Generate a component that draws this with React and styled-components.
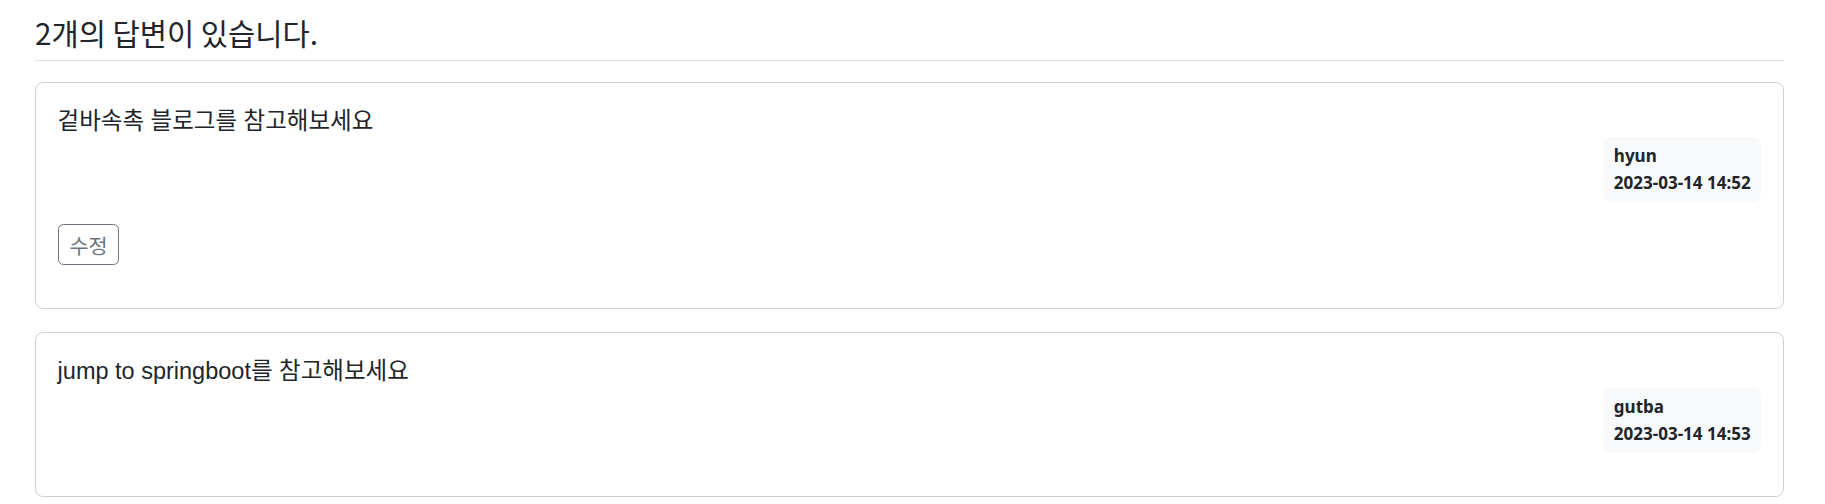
import React from "react";
import styled, { createGlobalStyle } from "styled-components";

const GlobalStyle = createGlobalStyle`
  * { box-sizing: border-box; }
  body {
    margin: 0;
    background: #fff;
    color: #212529;
    font-family: "Noto Sans CJK KR", "Noto Sans", sans-serif;
  }
`;

const answers = [
  {
    id: 1,
    content: "겉바속촉 블로그를 참고해보세요",
    author: "hyun",
    createDate: "2023-03-14 14:52",
    editable: true,
  },
  {
    id: 2,
    content: "jump to springboot를 참고해보세요",
    author: "gutba",
    createDate: "2023-03-14 14:53",
    editable: false,
  },
];

export default function App() {
  return (
    <>
      <GlobalStyle />
      <Page>
        <Heading>{`${answers.length}개의 답변이 있습니다.`}</Heading>
        {answers.map((a) => (
          <Card key={a.id}>
            <CardBody>
              <CardText>{a.content}</CardText>
              <MetaRow>
                <Badge>
                  <Author>{a.author}</Author>
                  <div>{a.createDate}</div>
                </Badge>
              </MetaRow>
              <Actions>{a.editable && <EditButton href="#">수정</EditButton>}</Actions>
            </CardBody>
          </Card>
        ))}
      </Page>
    </>
  );
}

const Page = styled.div`
  padding: 6px 41px 0 35px;
`;

const Heading = styled.h5`
  margin: 0 0 21px;
  padding: 10.8px 0;
  font-size: 29.6px;
  font-weight: 400;
  line-height: 32.4px;
  border-bottom: 1px solid #dee2e6;
`;

const Card = styled.div`
  border: 1px solid rgba(0, 0, 0, 0.175);
  border-radius: 8px;
  margin-bottom: 23px;
`;

const CardBody = styled.div`
  padding: 22px 21.6px 0;
  &::after {
    content: "";
    display: block;
    height: 21.5px;
  }
`;

/* latin at Arial widths, hangul from Noto CJK */
const CardText = styled.div`
  font-family: "Liberation Sans", "Noto Sans CJK KR", sans-serif;
  font-size: 23.5px;
  line-height: 32.4px;
  white-space: pre-line;
`;

const MetaRow = styled.div`
  display: flex;
  justify-content: flex-end;
`;

const Badge = styled.div`
  background: #f8f9fa;
  color: #212529;
  padding: 10.8px;
  border-radius: 8px;
  font-family: "Noto Sans", sans-serif;
  font-size: 17px;
  font-weight: 700;
  line-height: 16.2px;
  text-align: left;
`;

const Author = styled.div`
  margin-bottom: 10.8px;
`;

const Actions = styled.div`
  margin: 22px 0 21.5px;
`;

const EditButton = styled.a`
  display: inline-block;
  padding: 5.4px 10.8px;
  font-size: 20.8px;
  line-height: 28.4px;
  color: #6c757d;
  border: 1px solid #6c757d;
  border-radius: 5.4px;
  text-decoration: none;
`;
